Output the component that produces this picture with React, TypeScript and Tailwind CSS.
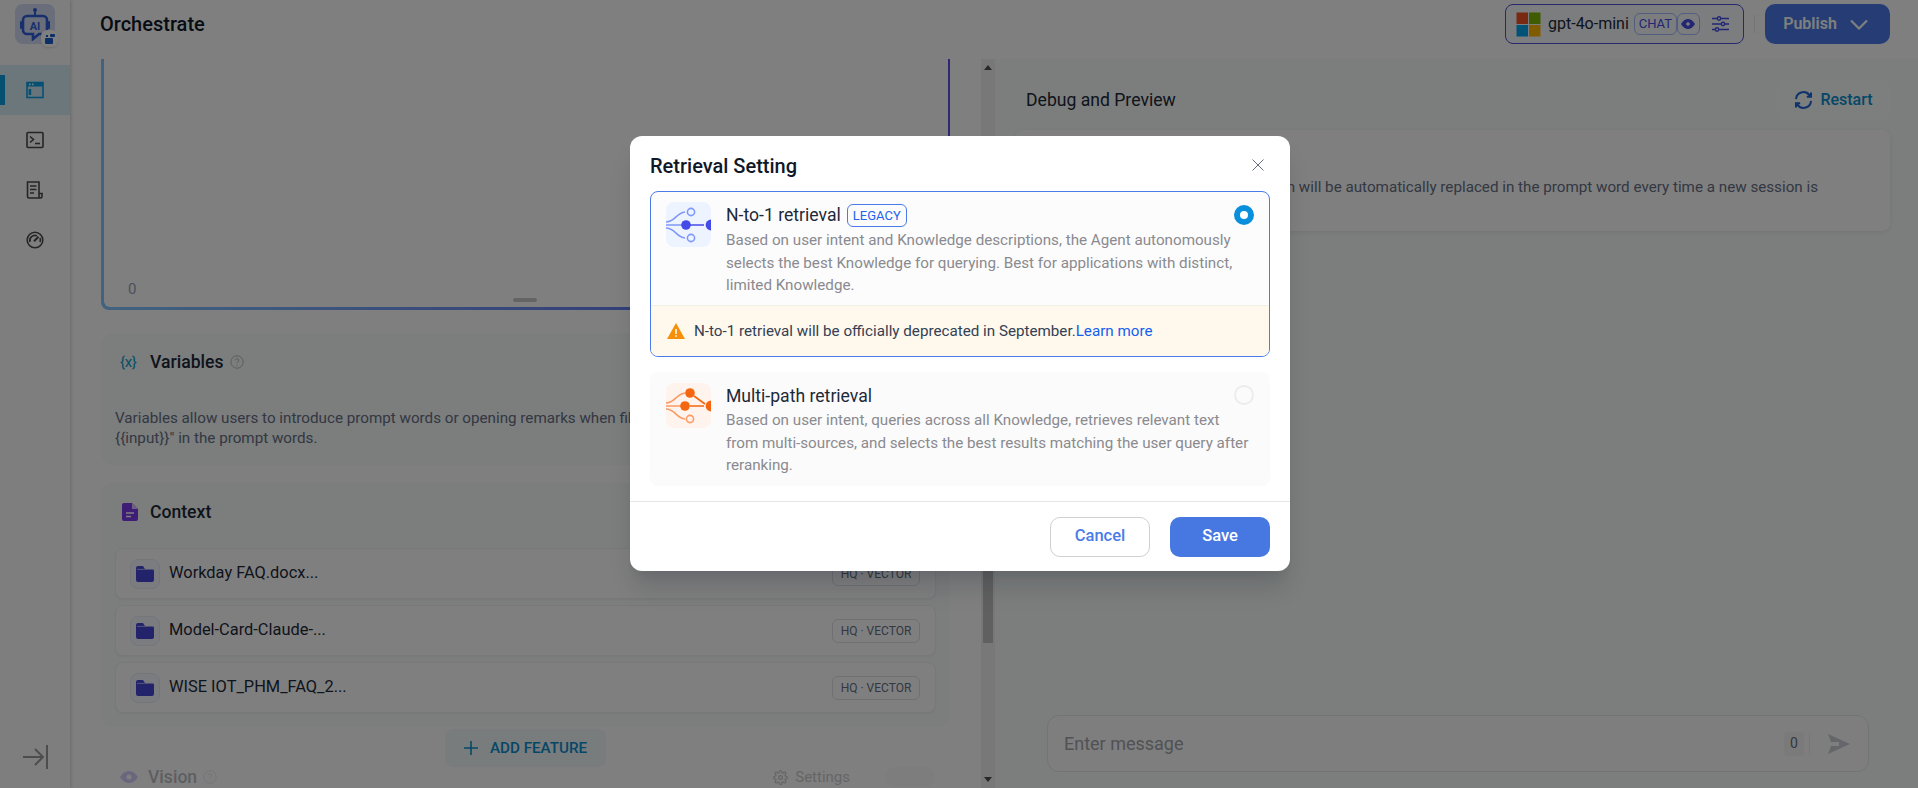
import React from "react";

const font = { fontFamily: "Roboto, 'Liberation Sans', sans-serif" };

function LogoIcon() {
  return (
    <svg width="30" height="34" viewBox="0 0 30 34" fill="none">
      <circle cx="15" cy="3" r="2" fill="#2f5fd8" />
      <path d="M15 4v4" stroke="#2f5fd8" strokeWidth="2" />
      <path d="M7 9h16a4 4 0 0 1 4 4v10a4 4 0 0 1-4 4h-4l-6 5v-5H7a4 4 0 0 1-4-4V13a4 4 0 0 1 4-4z" stroke="#2f5fd8" strokeWidth="2.6" />
      <rect x="0" y="14" width="2" height="8" rx="1" fill="#2f5fd8" />
      <rect x="28" y="14" width="2" height="8" rx="1" fill="#2f5fd8" />
      <text x="15" y="22.5" textAnchor="middle" fontSize="11" fontWeight="700" fill="#2f5fd8" fontFamily="Roboto, sans-serif">AI</text>
    </svg>
  );
}

function NavWindow() {
  return (
    <svg width="18" height="18" viewBox="0 0 18 18" fill="none">
      <rect x="1" y="1.5" width="16" height="15" fill="#cfeaf7" stroke="#0aa0e6" strokeWidth="1.6" />
      <rect x="1" y="1.5" width="16" height="4" fill="#0aa0e6" />
      <rect x="3" y="2.6" width="1.6" height="1.6" fill="#fff" />
      <rect x="6" y="2.6" width="1.6" height="1.6" fill="#fff" />
      <rect x="2.6" y="8" width="2.6" height="6" fill="#0aa0e6" />
    </svg>
  );
}
function NavTerminal() {
  return (
    <svg width="18" height="18" viewBox="0 0 18 18" fill="none" stroke="#4a4a4a" strokeWidth="1.6">
      <rect x="1" y="1.5" width="16" height="15" rx="1" />
      <path d="M4 5.5l3.5 3L4 11.5" />
      <path d="M9 12.5h5" />
    </svg>
  );
}
function NavDoc() {
  return (
    <svg width="18" height="18" viewBox="0 0 18 18" fill="none" stroke="#4a4a4a" strokeWidth="1.6">
      <path d="M14 17H3a1.5 1.5 0 0 1-1.5-1.5V1h11.5v14.500a1.500 1.500 0 0 0 1.500 1.500 1.500 1.500 0 0 0 1.500-1.500V12.500H13" />
      <path d="M4 5h6.500M4 8.500h6.500M4 12h4" />
    </svg>
  );
}
function NavGauge() {
  return (
    <svg width="18" height="18" viewBox="0 0 18 18" fill="none" stroke="#4a4a4a" strokeWidth="1.6">
      <circle cx="9" cy="9" r="7.8" />
      <path d="M4 11a5.2 5.2 0 0 1 7-6.2" />
      <path d="M14 7a5.2 5.2 0 0 1 0 4" />
      <path d="M8 10.2l4.5-4.5" strokeWidth="2" />
    </svg>
  );
}
function Collapse() {
  return (
    <svg width="26" height="26" viewBox="0 0 26 26" fill="none" stroke="#9a9a9a" strokeWidth="2">
      <path d="M1 13h20M13 5l8 8-8 8" />
      <path d="M25 1v24" />
    </svg>
  );
}
function Folder() {
  return (
    <svg width="18" height="16" viewBox="0 0 18 16" fill="#4747d8">
      <path d="M2 0h5l2 3h7a2 2 0 0 1 2 2v9a2 2 0 0 1-2 2H2a2 2 0 0 1-2-2V2a2 2 0 0 1 2-2z" />
      <path d="M1 3.4h16" stroke="#eef" strokeWidth=".6" />
    </svg>
  );
}
function Help({ size = 14 }: { size?: number }) {
  return (
    <svg width={size} height={size} viewBox="0 0 14 14" fill="none" stroke="#b8b8b8" strokeWidth="1">
      <circle cx="7" cy="7" r="6.2" />
      <path d="M5.2 5.4a1.8 1.8 0 1 1 2.6 1.7c-.5.3-.8.6-.8 1.3" />
      <path d="M7 10v.8" />
    </svg>
  );
}

function NTo1Icon() {
  const c = "#444ce7";
  const l = "#8098f9";
  return (
    <svg width="45" height="45" viewBox="0 0 45 45" fill="none">
      <path d="M0 20c9 0 10-9 19-10" stroke={l} strokeWidth="1.6" />
      <path d="M0 23h16" stroke={l} strokeWidth="1.6" />
      <path d="M0 26c9 0 10 9 19 10" stroke={l} strokeWidth="1.6" />
      <path d="M24 23h14" stroke={c} strokeWidth="1.6" />
      <circle cx="25" cy="10" r="3.6" stroke={l} strokeWidth="1.6" />
      <circle cx="25" cy="36" r="3.6" stroke={l} strokeWidth="1.6" />
      <circle cx="20" cy="23" r="4.8" fill={c} />
      <circle cx="45" cy="23" r="5.4" fill={c} />
    </svg>
  );
}
function MultiIcon() {
  const c = "#f4660f";
  const l = "#fb9a63";
  return (
    <svg width="45" height="45" viewBox="0 0 45 45" fill="none">
      <path d="M0 20c9 0 10-9 19-10" stroke={l} strokeWidth="1.6" />
      <path d="M0 23h16" stroke={l} strokeWidth="1.6" />
      <path d="M0 26c9 0 10 9 19 10" stroke={l} strokeWidth="1.6" />
      <path d="M24 23h14" stroke={c} strokeWidth="1.6" />
      <path d="M28 13l11 8" stroke={c} strokeWidth="1.6" />
      <circle cx="24" cy="10" r="4.8" fill={c} />
      <circle cx="24" cy="36" r="3.6" stroke={l} strokeWidth="1.6" />
      <circle cx="19" cy="23" r="4.8" fill={c} />
      <circle cx="45" cy="23" r="5.4" fill={c} />
    </svg>
  );
}

function ContextRow({ name }: { name: string }) {
  return (
    <div className="flex items-center justify-between h-[51px] pl-[14px] pr-[15px] bg-white border border-[#f0f1f3] rounded-lg shadow-[0_1px_2px_rgba(0,0,0,0.04)]">
      <div className="flex items-center gap-[9px]">
        <div className="w-[30px] h-[30px] flex items-center justify-center rounded-lg border border-[#eaecf5] bg-[#f5f8ff]">
          <Folder />
        </div>
        <span className="text-[16.4px] text-[#1d2939]">{name}</span>
      </div>
      <span className="h-[24px] w-[88px] flex items-center justify-center border border-[#e0e0e5] rounded-md text-[12px] text-[#667085]">HQ · VECTOR</span>
    </div>
  );
}

export default function App() {
  return (
    <div className="relative flex h-screen w-full overflow-hidden bg-white" style={font}>
      <aside className="w-[70px] shrink-0 flex flex-col bg-[#fdfdfd] shadow-[1px_0_4px_rgba(0,0,0,0.18)] z-10">
        <div className="relative mt-1 ml-[15px] w-10 h-10 rounded-lg bg-[#d3dcf5] flex items-center justify-center">
          <LogoIcon />
          <div className="absolute -right-[3px] -bottom-[3px] w-[17px] h-[17px] rounded-md bg-white shadow flex items-center justify-center">
            <svg width="10" height="10" viewBox="0 0 10 10" fill="#1a5fd0">
              <rect x="0" y="4" width="8" height="6" rx="1" />
              <rect x="5" y="0" width="5" height="3" rx="1" />
              <rect x="1" y="1" width="2" height="2" />
            </svg>
          </div>
        </div>
        <nav className="mt-[21px] flex flex-col">
          <div className="relative h-[50px] flex items-center justify-center bg-[#d9eef6]">
            <span className="absolute left-0 top-[10px] h-[30px] w-[5px] bg-[#0a9ee0]" />
            <NavWindow />
          </div>
          <div className="h-[50px] flex items-center justify-center"><NavTerminal /></div>
          <div className="h-[50px] flex items-center justify-center"><NavDoc /></div>
          <div className="h-[50px] flex items-center justify-center"><NavGauge /></div>
        </nav>
        <div className="mt-auto mb-[18px] flex justify-center"><Collapse /></div>
      </aside>

      <div className="flex-1 min-w-0 flex flex-col">
        <header className="h-[59px] shrink-0 flex items-start pt-1 pl-[30px] pr-[28px] justify-between">
          <h1 className="h-10 flex items-center text-[20px] font-medium text-[#101828]">Orchestrate</h1>
          <div className="flex items-center">
            <div className="w-[239px] h-10 rounded-lg border border-[#5050d8] bg-[#f7fbff] flex items-center pl-[10px]">
              <svg width="25" height="25" viewBox="0 0 25 25">
                <rect x="0.5" y="0.5" width="11.5" height="11.5" fill="#f25022" />
                <rect x="13" y="0.5" width="11.5" height="11.5" fill="#7fba00" />
                <rect x="0.5" y="13" width="11.5" height="11.5" fill="#00a4ef" />
                <rect x="13" y="13" width="11.5" height="11.5" fill="#ffb900" />
              </svg>
              <span className="ml-[7px] text-[16px] text-[#1d2939]">gpt-4o-mini</span>
              <span className="ml-[5px] h-[22px] w-[43px] flex items-center justify-center rounded-md border border-[#a4bcfd] text-[13px] text-[#444ce7]">CHAT</span>
              <span className="h-[22px] w-[23px] flex items-center justify-center rounded-md border border-[#a4bcfd]">
                <svg width="14" height="10" viewBox="0 0 14 10">
                  <path d="M0 5c2-3.400 4.500-5 7-5s5 1.600 7 5c-2 3.400-4.500 5-7 5S2 8.400 0 5z" fill="#444ce7" />
                  <circle cx="7" cy="5" r="1.800" fill="#fff" />
                </svg>
              </span>
              <svg className="ml-[12px]" width="17" height="16" viewBox="0 0 17 16" fill="none" stroke="#444ce7" strokeWidth="1.4">
                <path d="M0 2.500h5M9 2.500h8M0 8h9M13 8h4M0 13.500h3M7 13.500h10" />
                <circle cx="7" cy="2.500" r="1.700" />
                <circle cx="11" cy="8" r="1.700" />
                <circle cx="5" cy="13.500" r="1.700" />
              </svg>
            </div>
            <span className="ml-[10px] w-px h-[18px] bg-[#e4e7ec]" />
            <button className="ml-[10px] w-[125px] h-10 pr-[4px] rounded-[10px] bg-[#4a7be8] flex items-center justify-center gap-[13px] text-[16px] font-semibold text-white">
              Publish
              <svg width="18" height="11" viewBox="0 0 18 11" fill="none" stroke="#fff" strokeWidth="2.200"><path d="M1 1.500l8 8 8-8" /></svg>
            </button>
          </div>
        </header>

        <div className="flex-1 min-h-0 flex">
          <section className="relative w-[911px] shrink-0 pl-[31px] pr-[31px] overflow-hidden">
            <div className="h-[251px] rounded-b-lg pl-[3px] pr-[2px] pb-[3px] bg-linear-to-r from-[#84c4ff] to-[#5a4fe8]">
              <div className="relative h-full rounded-b-md bg-white">
                <span className="absolute left-[24px] bottom-[7px] text-[15px] text-[#98a2b3]">0</span>
                <span className="absolute left-[409px] bottom-[5px] w-[24px] h-[4px] rounded-sm bg-[#c8c8c8]" />
              </div>
            </div>

            <div className="mt-[23px] h-[132px] rounded-xl bg-[#f8fbfa] px-[14px] pt-[17px]">
              <div className="flex items-center h-6">
                <span className="ml-[5px] w-[20px] text-[15px] text-[#0d9ecf] tracking-tight">{"{x}"}</span>
                <span className="ml-[10px] text-[17.6px] font-medium text-[#1d2939]">Variables</span>
                <span className="ml-[6px]"><Help /></span>
              </div>
              <p className="mt-[34px] text-[15.2px] leading-[20px] text-[#667085]">
                Variables allow users to introduce prompt words or opening remarks when filling out forms. You can try entering "<br />{"{{input}}"}" in the prompt words.
              </p>
            </div>

            <div className="mt-[18px] h-[244px] rounded-xl bg-[#f8fbfa] px-[14px] pt-[17px]">
              <div className="flex items-center h-6">
                <svg className="ml-[7px]" width="16" height="18" viewBox="0 0 16 18">
                  <path d="M2 0h8l6 6v10a2 2 0 0 1-2 2H2a2 2 0 0 1-2-2V2a2 2 0 0 1 2-2z" fill="#7c3aed" />
                  <path d="M10 0l6 6h-6z" fill="#d6c6fb" />
                  <path d="M4 10h8M4 13.500h5" stroke="#fff" strokeWidth="1.400" />
                </svg>
                <span className="ml-[12px] text-[17.6px] font-medium text-[#1d2939]">Context</span>
              </div>
              <div className="mt-[24px] flex flex-col gap-[6px]">
                <ContextRow name="Workday FAQ.docx..." />
                <ContextRow name="Model-Card-Claude-..." />
                <ContextRow name="WISE IOT_PHM_FAQ_2..." />
              </div>
            </div>

            <div className="mt-[40px] flex items-center justify-between pl-[19px] pr-[15px] h-5 opacity-30">
              <div className="flex items-center">
                <svg width="18" height="12" viewBox="0 0 18 12"><path d="M0 6c2.500-4 5.500-6 9-6s6.500 2 9 6c-2.500 4-5.500 6-9 6s-6.500-2-9-6z" fill="#7a5af8" /><circle cx="9" cy="6" r="2.500" fill="#fff" /></svg>
                <span className="ml-[10px] text-[17.6px] font-medium text-[#1d2939]">Vision</span>
                <span className="ml-[6px]"><Help /></span>
              </div>
              <div className="flex items-center">
                <svg width="15" height="15" viewBox="0 0 24 24" fill="none" stroke="#555" strokeWidth="2"><circle cx="12" cy="12" r="3" /><path d="M19.400 15a1.700 1.700 0 0 0 .3 1.800l.1.100a2 2 0 1 1-2.800 2.800l-.1-.1a1.700 1.700 0 0 0-2.800 1.200V21a2 2 0 1 1-4 0v-.1a1.700 1.700 0 0 0-2.900-1.200l-.1.100a2 2 0 1 1-2.800-2.800l.1-.1a1.700 1.700 0 0 0-1.200-2.900H3a2 2 0 1 1 0-4h.1a1.700 1.700 0 0 0 1.200-2.800l-.1-.1a2 2 0 1 1 2.800-2.800l.1.100a1.700 1.700 0 0 0 1.800.3H9a1.700 1.700 0 0 0 1-1.500V3a2 2 0 1 1 4 0v.1a1.700 1.700 0 0 0 2.900 1.200l.1-.1a2 2 0 1 1 2.800 2.800l-.1.100a1.700 1.700 0 0 0-.3 1.800V9a1.700 1.700 0 0 0 1.500 1H21a2 2 0 1 1 0 4h-.1a1.700 1.700 0 0 0-1.500 1z" /></svg>
                <span className="ml-[7px] text-[15px] text-[#555]">Settings</span>
                <span className="ml-[35px] w-[50px] h-5 rounded-full bg-[#f0f0f0]" />
              </div>
            </div>

            <button className="absolute left-[375px] top-[670px] w-[161px] h-[38px] rounded-lg bg-[#f0f8fb] flex items-center justify-center gap-[12px] text-[15.2px] font-medium text-[#0a8fcf]">
              <svg width="14" height="14" viewBox="0 0 14 14" stroke="#0a8fcf" strokeWidth="1.600"><path d="M7 0v14M0 7h14" /></svg>
              ADD FEATURE
            </button>
          </section>

          <div className="w-[14px] shrink-0 flex flex-col items-center bg-[#f1f1f1]">
            <svg className="mt-[6px]" width="8" height="5" viewBox="0 0 8 5" fill="#505050"><path d="M4 0l4 5H0z" /></svg>
            <div className="mt-[340px] w-[10px] h-[233px] bg-[#c1c1c1]" />
            <svg className="mt-auto mb-[6px]" width="8" height="5" viewBox="0 0 8 5" fill="#505050"><path d="M4 5L0 0h8z" /></svg>
          </div>

          <section className="flex-1 min-w-0 flex flex-col bg-[#f8fcfa] pl-[20px] pr-[28px]">
            <div className="pt-[21px] flex items-start justify-between">
              <h2 className="ml-[11px] h-10 flex items-center text-[17.6px] text-[#1d2939]">Debug and Preview</h2>
              <button className="w-[114px] h-10 rounded-lg bg-[#fafdfc] flex items-center justify-center gap-[6px] text-[16px] font-medium text-[#0a8fcf]">
                <svg width="21" height="20" viewBox="0 0 24 24" fill="none" stroke="#1c64d8" strokeWidth="2.400"><path d="M3 11a9 9 0 0 1 16-5l2 2" /><path d="M21 3v5h-5" /><path d="M21 13a9 9 0 0 1-16 5l-2-2" /><path d="M3 21v-5h5" /></svg>
                Restart
              </button>
            </div>
            <div className="mt-[10px] h-[101px] rounded-lg bg-white shadow-[0_1px_4px_rgba(0,0,0,0.08)] pl-4 pr-[72px] pt-[47px]">
              <p className="text-right text-[15.2px] leading-5 text-[#667085]">
                The value of the variable filled in will be automatically replaced in the prompt word every time a new session is
              </p>
            </div>
            <div className="mt-auto mb-[16px] ml-[32px] mr-[21px] h-[57px] rounded-xl border border-[#e4e7ec] bg-[#fdfdfd] flex items-center pl-4 pr-[18px]">
              <span className="text-[18px] text-[#a0a4ab]">Enter message</span>
              <span className="ml-auto w-[20px] h-[24px] flex items-center justify-center rounded bg-[#f5f5f5] text-[14px] text-[#667085]">0</span>
              <span className="ml-[5px] w-px h-5 bg-[#eeeeee]" />
              <svg className="ml-[18px]" width="22" height="20" viewBox="0 0 22 20" fill="#c8ccd2"><path d="M0 0l22 10L0 20l3-8h8V8H3z" /></svg>
            </div>
          </section>
        </div>
      </div>

      <div className="absolute inset-0 z-20 bg-black/50" />

      <div className="absolute z-30 left-[630px] top-[136px] w-[660px] h-[435px] rounded-xl bg-white shadow-[0_20px_24px_-4px_rgba(16,24,40,0.16),0_8px_8px_-4px_rgba(16,24,40,0.06)]">
        <div className="relative h-[55px] px-5 flex items-start pt-[17px]">
          <h3 className="text-[20px] leading-[26px] font-medium text-[#101828]">Retrieval Setting</h3>
          <svg className="absolute left-[622px] top-[23px]" width="12" height="12" viewBox="0 0 12 12" stroke="#667085" strokeWidth="1"><path d="M0.500 0.500l11 11M11.500 0.500l-11 11" /></svg>
        </div>
        <div className="mx-5 rounded-lg border border-[#4a7be8] bg-[#fcfcfd] overflow-hidden">
          <div className="h-[113px] flex relative pl-[15px] pt-[10px]">
            <div className="w-[45px] h-[45px] rounded-lg bg-[#eef4ff] overflow-hidden shrink-0"><NTo1Icon /></div>
            <div className="ml-[15px] w-[510px]">
              <div className="flex items-center h-[27px]">
                <span className="text-[17.6px] text-[#1d2939]">N-to-1 retrieval</span>
                <span className="ml-[6px] h-[23px] w-[60px] flex items-center justify-center rounded-md border border-[#4a7be8] text-[13px] text-[#2563eb]">LEGACY</span>
              </div>
              <p className="text-[15.2px] leading-[22.5px] text-[#8a8a8f]">Based on user intent and Knowledge descriptions, the Agent autonomously selects the best Knowledge for querying. Best for applications with distinct, limited Knowledge.</p>
            </div>
            <span className="absolute right-[15px] top-[13px] w-5 h-5 rounded-full bg-[#0a8fdc] flex items-center justify-center">
              <span className="w-[8px] h-[8px] rounded-full bg-white" />
            </span>
          </div>
          <div className="h-[51px] border-t border-[#f2efe6] bg-[#fef9ec] flex items-center pl-4">
            <svg width="18" height="16" viewBox="0 0 18 16"><path d="M9 0l9 16H0z" fill="#f79009" /><path d="M9 6v5M9 12.200v1.500" stroke="#fff" strokeWidth="1.500" /></svg>
            <span className="ml-[9px] text-[15.2px] text-[#344054]">N-to-1 retrieval will be officially deprecated in September.<span className="text-[#155eef]">Learn more</span></span>
          </div>
        </div>
        <div className="mx-5 mt-[15px] h-[114px] rounded-lg bg-[#fbfbfb] flex relative pl-[16px] pt-[11px]">
          <div className="w-[45px] h-[45px] rounded-lg bg-[#fff4ed] overflow-hidden shrink-0"><MultiIcon /></div>
          <div className="ml-[15px] w-[525px]">
            <div className="flex items-center h-[26px]">
              <span className="text-[17.6px] text-[#1d2939]">Multi-path retrieval</span>
            </div>
            <p className="text-[15.2px] leading-[22.5px] text-[#8a8a8f]">Based on user intent, queries across all Knowledge, retrieves relevant text from multi-sources, and selects the best results matching the user query after reranking.</p>
          </div>
          <span className="absolute right-[16px] top-[13px] w-5 h-5 rounded-full border-2 border-[#ececec]" />
        </div>
        <div className="mt-[15px] border-t border-[#e5e5e5] h-[70px] flex items-center justify-end gap-5 pr-5">
          <button className="w-[100px] h-10 rounded-[10px] border border-[#d0d0d0] text-[16.5px] font-medium text-[#4a7be8]">Cancel</button>
          <button className="w-[100px] h-10 rounded-[10px] bg-[#4778e2] text-[16.5px] font-medium text-white">Save</button>
        </div>
      </div>
    </div>
  );
}
